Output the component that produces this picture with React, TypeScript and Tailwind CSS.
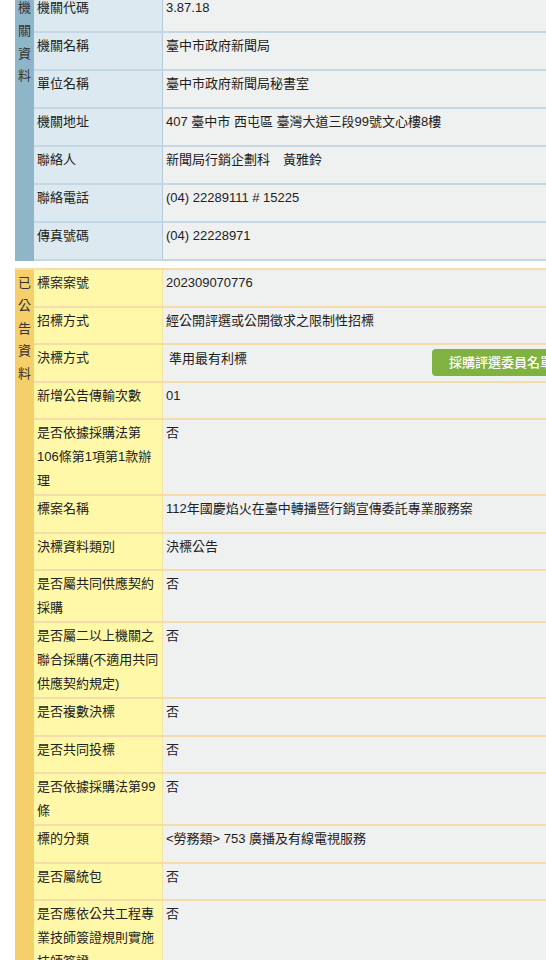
import React from "react";

type Row = { label: string; value: React.ReactNode };

const agencyRows: Row[] = [
  { label: "機關代碼", value: "3.87.18" },
  { label: "機關名稱", value: "臺中市政府新聞局" },
  { label: "單位名稱", value: "臺中市政府新聞局秘書室" },
  { label: "機關地址", value: "407 臺中市 西屯區 臺灣大道三段99號文心樓8樓" },
  { label: "聯絡人", value: "新聞局行銷企劃科　黃雅鈴" },
  { label: "聯絡電話", value: "(04) 22289111 # 15225" },
  { label: "傳真號碼", value: "(04) 22228971" },
];

const noticeRows: Row[] = [
  { label: "標案案號", value: "202309070776" },
  { label: "招標方式", value: "經公開評選或公開徵求之限制性招標" },
  {
    label: "決標方式",
    value: (
      <div className="flex items-start">
        <span className="w-[266px] shrink-0 pl-[3px] pt-[1px]">準用最有利標</span>
        <button className="mt-[3px] h-[27px] shrink-0 whitespace-nowrap rounded-[4px] bg-[#7fb241] px-[17px] text-[13px] font-medium leading-[27px] text-white">
          採購評選委員名單
        </button>
      </div>
    ),
  },
  { label: "新增公告傳輸次數", value: "01" },
  { label: "是否依據採購法第106條第1項第1款辦理", value: "否" },
  { label: "標案名稱", value: "112年國慶焰火在臺中轉播暨行銷宣傳委託專業服務案" },
  { label: "決標資料類別", value: "決標公告" },
  { label: "是否屬共同供應契約採購", value: "否" },
  { label: "是否屬二以上機關之聯合採購(不適用共同供應契約規定)", value: "否" },
  { label: "是否複數決標", value: "否" },
  { label: "是否共同投標", value: "否" },
  { label: "是否依據採購法第99條", value: "否" },
  { label: "標的分類", value: "<勞務類> 753 廣播及有線電視服務" },
  { label: "是否屬統包", value: "否" },
  { label: "是否應依公共工程專業技師簽證規則實施技師簽證", value: "否" },
];

function Section({
  title,
  rows,
  sideBg,
  labelBg,
  lineColor,
  divider,
  rowMin,
}: {
  title: string;
  rows: Row[];
  sideBg: string;
  labelBg: string;
  lineColor: string;
  divider: string;
  rowMin: string;
}) {
  return (
    <div className="flex w-[640px]">
      <div className={`w-[19px] shrink-0 ${sideBg} pt-[2px] text-center text-[13px] leading-[22.8px] text-[#333]`}>
        {title.split("").map((c, i) => (
          <div key={i}>{c}</div>
        ))}
      </div>
      <div className="flex-1">
        {rows.map((r, i) => (
          <div key={i} className={`flex border-b-2 ${lineColor}`}>
            <div className={`w-[129px] shrink-0 ${labelBg} border-r ${divider} pl-[3px] pr-[2px] py-[1px] ${rowMin}`}>
              {r.label}
            </div>
            <div className={`flex-1 bg-[#eff0f0] pl-[3px] py-[1px] ${rowMin}`}>{r.value}</div>
          </div>
        ))}
      </div>
    </div>
  );
}

export default function App() {
  return (
    <div
      className="h-[960px] w-[546px] overflow-hidden bg-white text-[13px] leading-[24px] text-[#222]"
      style={{ fontFamily: '"Liberation Sans", "Noto Sans CJK TC", sans-serif' }}
    >
      <div className="-mt-[5px] pl-[15px]">
        <Section
          title="機關資料"
          rows={agencyRows}
          sideBg="bg-[#8fb5c9]"
          labelBg="bg-[#dce9f1]"
          lineColor="border-[#c3d7e5]"
          divider="border-[#b3cadb]"
          rowMin="min-h-[36px]"
        />
        <div className="h-[7px]" />
        <div className="border-t-2 border-[#f6dca8]">
          <Section
            title="已公告資料"
            rows={noticeRows}
            sideBg="bg-[#f4cf6a]"
            labelBg="bg-[#fff8a8]"
            lineColor="border-[#f6dca8]"
            divider="border-[#f3e4a0]"
            rowMin="min-h-[35.5px]"
          />
        </div>
      </div>
    </div>
  );
}
